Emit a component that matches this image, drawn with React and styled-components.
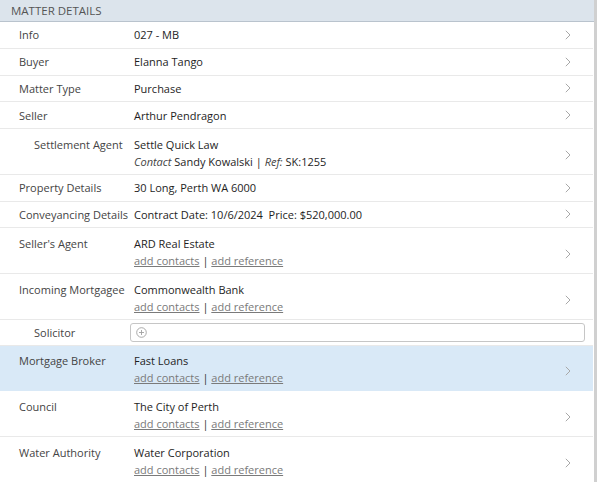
import React from 'react'
import styled, { createGlobalStyle } from 'styled-components'

const GlobalStyle = createGlobalStyle`
  html, body {
    margin: 0;
    padding: 0;
    background: #fff;
  }
  body {
    font-family: 'Open Sans', 'Noto Sans', Arial, sans-serif;
    font-size: 11px;
    color: #222;
  }
`

const rows = [
  { label: 'Info', value: '027 - MB' },
  { label: 'Buyer', value: 'Elanna Tango' },
  { label: 'Matter Type', value: 'Purchase' },
  { label: 'Seller', value: 'Arthur Pendragon' },
  {
    label: 'Settlement Agent',
    indent: true,
    value: 'Settle Quick Law',
    contact: { name: 'Sandy Kowalski', ref: 'SK:1255' }
  },
  { label: 'Property Details', value: '30 Long, Perth WA 6000' },
  { label: 'Conveyancing Details', value: 'Contract Date: 10/6/2024\u00a0\u00a0Price: $520,000.00' },
  { label: "Seller's Agent", value: 'ARD Real Estate', links: true },
  { label: 'Incoming Mortgagee', value: 'Commonwealth Bank', links: true },
  { label: 'Solicitor', indent: true, input: true },
  { label: 'Mortgage Broker', value: 'Fast Loans', links: true, selected: true },
  { label: 'Council', value: 'The City of Perth', links: true },
  { label: 'Water Authority', value: 'Water Corporation', links: true }
]

const MatterDetails = () => (
  <Panel>
    <Header>MATTER DETAILS</Header>
    {rows.map(row => {
      const tall = row.links || row.contact
      return (
        <Row key={row.label} $tall={tall} $selected={row.selected} $input={row.input}>
          <Label $indent={row.indent}>{row.label}</Label>
          {row.input ? (
            <AddBox>
              <PlusIcon />
            </AddBox>
          ) : (
            <Value>
              <Line>{row.value}</Line>
              {row.contact && (
                <Line>
                  <Muted>Contact</Muted> {row.contact.name} | <Muted>Ref:</Muted> {row.contact.ref}
                </Line>
              )}
              {row.links && (
                <Line>
                  <LinkText>add contacts</LinkText> <Sep>|</Sep> <LinkText>add reference</LinkText>
                </Line>
              )}
            </Value>
          )}
          {!row.input && (
            <ChevronCell>
              <Chevron />
            </ChevronCell>
          )}
        </Row>
      )
    })}
  </Panel>
)

const Chevron = () => (
  <svg width="6" height="10" viewBox="0 0 6 10">
    <path d="M0.8 0.8 L5 5 L0.8 9.2" fill="none" stroke="#a8a8a8" strokeWidth="1" />
  </svg>
)

const PlusIcon = () => (
  <svg width="11" height="11" viewBox="0 0 11 11">
    <circle cx="5.5" cy="5.5" r="4.8" fill="none" stroke="#a0a0a0" strokeWidth="0.9" />
    <path d="M5.5 3 V8 M3 5.5 H8" stroke="#a0a0a0" strokeWidth="0.9" />
  </svg>
)

export default function App() {
  return (
    <>
      <GlobalStyle />
      <MatterDetails />
    </>
  )
}

const Panel = styled.div`
  width: 594px;
  min-height: 482px;
  border-right: 3px solid #d0d0d0;
  background: #fff;
`

const Header = styled.div`
  height: 21px;
  line-height: 21px;
  padding-left: 11px;
  background: #dce4ec;
  border-bottom: 1px solid #b9c3cd;
  color: #555;
  font-size: 11.5px;
`

const Row = styled.div`
  display: flex;
  align-items: ${p => (p.$tall ? 'flex-start' : 'center')};
  min-height: ${p => (p.$tall ? '45.75px' : p.$input ? '25.75px' : '26.75px')};
  padding-top: ${p => (p.$tall ? '6.5px' : '0')};
  box-sizing: border-box;
  border-bottom: 1px solid ${p => (p.$selected ? '#d9e9f7' : '#e9e9e9')};
  background: ${p => (p.$selected ? '#d9e9f7' : '#fff')};
  margin-right: 1px;
`

const Label = styled.div`
  width: ${p => (p.$indent ? '100px' : '115px')};
  padding-left: ${p => (p.$indent ? '34px' : '19px')};
  line-height: 17px;
  color: #444;
  white-space: nowrap;
`

const Value = styled.div`
  flex: 1;
  color: #1e1e1e;
`

const Line = styled.div`
  line-height: 17px;
  white-space: nowrap;
`

const Muted = styled.i`
  color: #444;
`

const LinkText = styled.span`
  color: #7a7a7a;
  text-decoration: underline;
`

const Sep = styled.span`
  color: #333;
`

const ChevronCell = styled.div`
  width: 28px;
  align-self: center;
  display: flex;
  align-items: center;
`

const AddBox = styled.div`
  margin-left: -4px;
  margin-right: 8px;
  flex: 1;
  height: 19px;
  border: 1px solid #c6c6c6;
  border-radius: 3px;
  display: flex;
  align-items: center;
  padding-left: 5px;
  box-sizing: border-box;
`
